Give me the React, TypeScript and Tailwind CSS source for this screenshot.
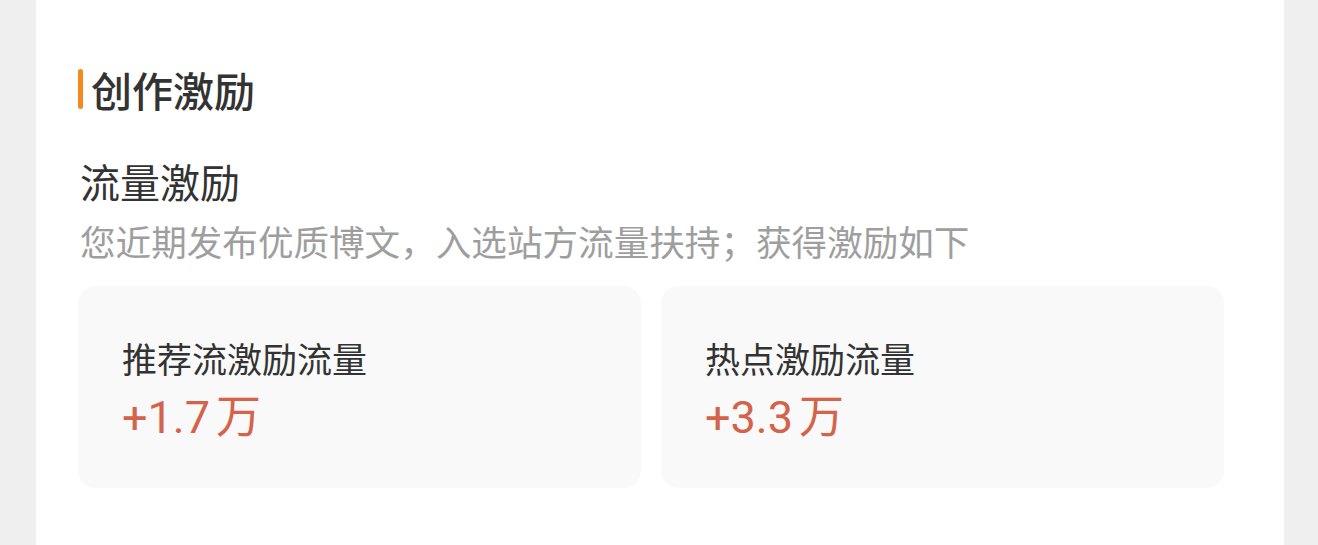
const font = { fontFamily: '"Noto Sans CJK SC", "Noto Sans", sans-serif' };
const digits = { fontFamily: 'Roboto, "Noto Sans CJK SC", sans-serif' };

type Stat = { label: string; value: string };

const stats: Stat[] = [
  { label: '推荐流激励流量', value: '+1.7' },
  { label: '热点激励流量', value: '+3.3' },
];

function StatCard({ label, value }: Stat) {
  return (
    <div className="flex-1 h-[202px] rounded-[18px] bg-[#f9f9f9] pl-[44px] pt-[50px]">
      <div className="text-[35px] leading-[44px] text-[#333333]">{label}</div>
      <div className="mt-[8px] text-[45px] leading-[52px] text-[#d3634a] flex items-baseline">
        <span style={digits}>{value}</span>
        <span className="ml-[6px]">万</span>
      </div>
    </div>
  );
}

export default function App() {
  return (
    <div className="w-[1318px] h-[545px] bg-[#efefef] pl-[36px] pr-[34px] overflow-hidden" style={font}>
      <div className="h-full bg-white pl-[42px] pr-[60px] pt-[65px]">
        <div className="flex items-center">
          <div className="w-[5px] h-[40px] rounded-full bg-[#f28a1d]" />
          <h1 className="ml-[8px] text-[41px] leading-[48px] font-medium text-[#333333]">创作激励</h1>
        </div>

        <h2 className="mt-[44px] ml-[2px] text-[40px] leading-[48px] text-[#333333]">流量激励</h2>
        <p className="mt-[14px] ml-[2px] text-[35.6px] leading-[44px] text-[#9e9e9e] whitespace-nowrap">
          您近期发布优质博文，入选站方流量扶持；获得激励如下
        </p>

        <div className="mt-[23px] flex gap-[20px]">
          {stats.map((s) => (
            <StatCard key={s.label} {...s} />
          ))}
        </div>
      </div>
    </div>
  );
}
